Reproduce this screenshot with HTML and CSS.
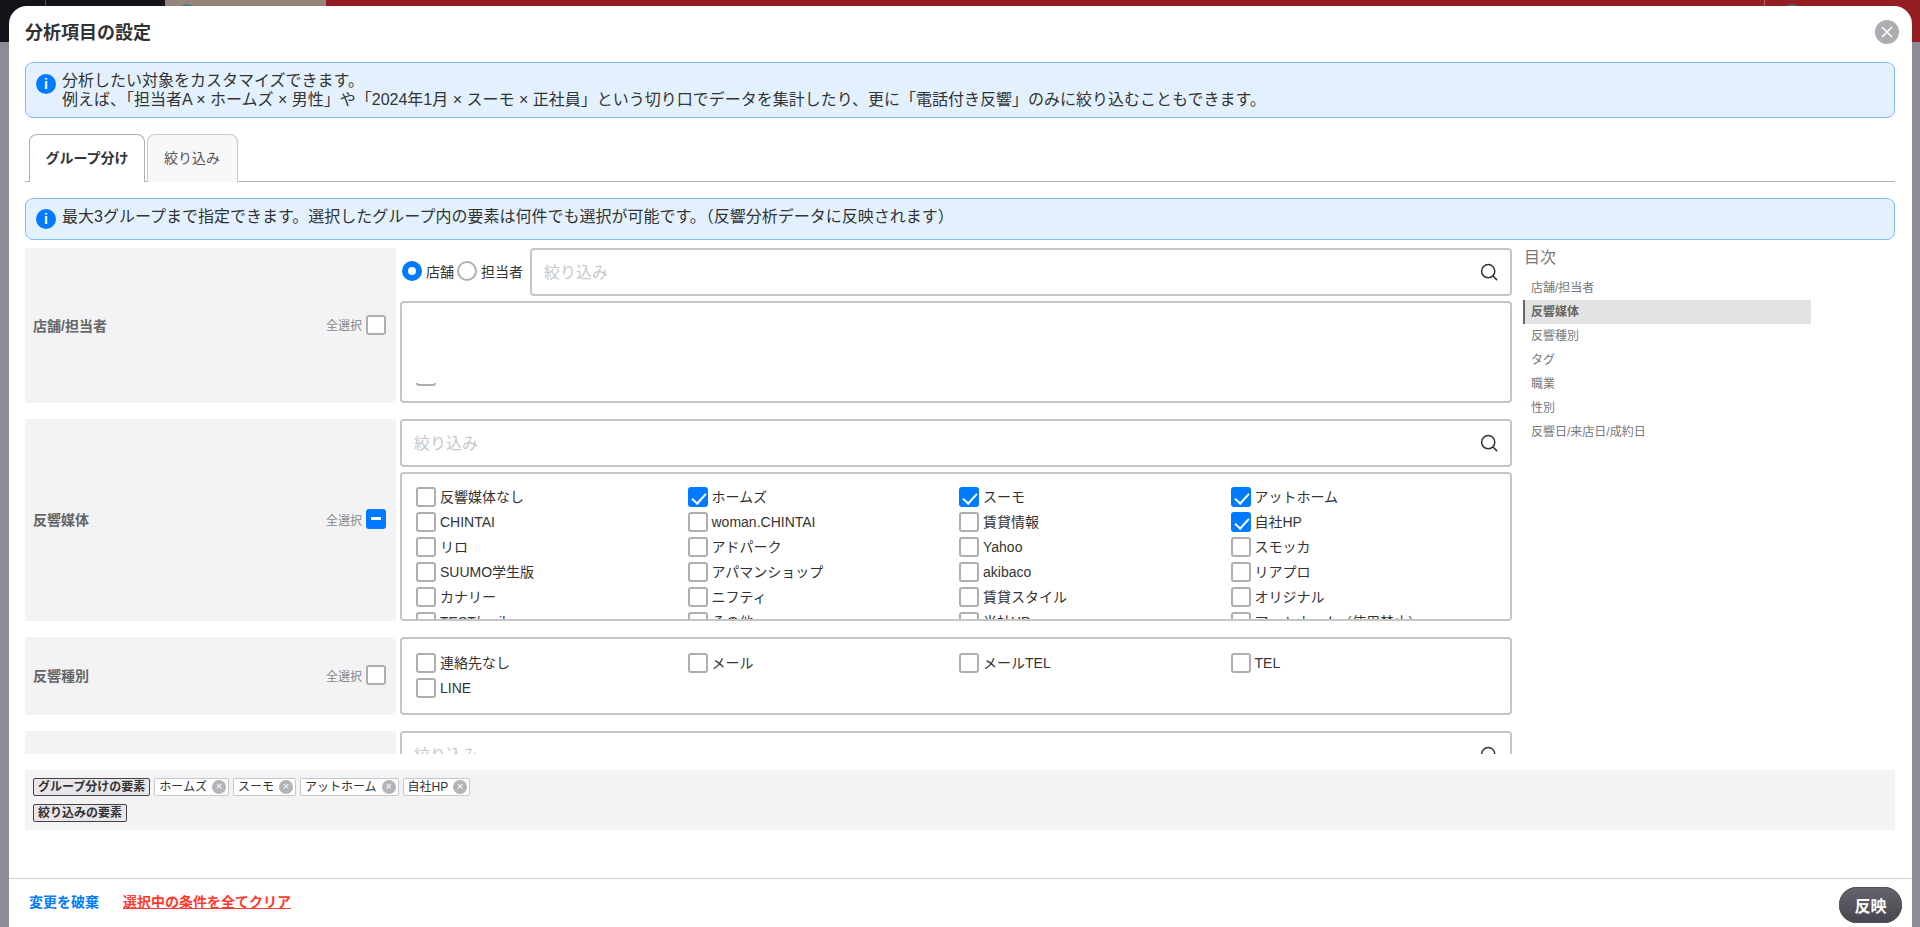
FILE: index.html
```html
<!DOCTYPE html>
<html lang="ja">
<head>
  <title>分析項目の設定</title>
  <meta charset="UTF-8">
  <link rel="stylesheet" href="styles.css">
</head>
<body>
  <!-- page behind the dialog, only the top edge shows -->
  <div class="backdrop">
    <div class="backdrop-bar">
      <div class="bar-dark"><span class="bar-line"></span></div>
      <div class="bar-photo"><span class="bar-dot"></span></div>
      <div class="bar-red"><span class="bar-line bar-line-right"></span><span class="bar-dot bar-dot-right"></span></div>
    </div>
  </div>

  <div class="modal">
    <div class="modal-head">
      <h1>分析項目の設定</h1>
      <button class="close-button" aria-label="閉じる">
        <svg width="12" height="12" viewBox="0 0 12 12"><path d="M1.5 1.5l9 9M10.5 1.5l-9 9" stroke="#fff" stroke-width="1.6" stroke-linecap="round" fill="none"/></svg>
      </button>
    </div>

    <div class="modal-body">
      <div class="info-box">
        <span class="info-icon">i</span>
        <p>分析したい対象をカスタマイズできます。<br>例えば、「担当者A × ホームズ × 男性」や「2024年1月 × スーモ × 正社員」という切り口でデータを集計したり、更に「電話付き反響」のみに絞り込むこともできます。</p>
      </div>

      <div class="tabs">
        <div class="tab tab-active">グループ分け</div>
        <div class="tab">絞り込み</div>
      </div>

      <div class="info-box info-box-single">
        <span class="info-icon">i</span>
        <p>最大3グループまで指定できます。選択したグループ内の要素は何件でも選択が可能です。（反響分析データに反映されます）</p>
      </div>

      <div class="scroll-area">
        <div class="sections">

          <div class="section section-staff">
            <div class="section-label">
              <span>店舗/担当者</span>
              <label class="select-all">全選択<span class="checkbox"></span></label>
            </div>
            <div class="section-fields">
              <div class="search-row">
                <label class="radio-item"><span class="radio radio-on"></span>店舗</label>
                <label class="radio-item"><span class="radio"></span>担当者</label>
                <div class="search-input search-input-grow">
                  <span class="placeholder">絞り込み</span>
                  <svg class="search-icon" width="18" height="18" viewBox="0 0 18 18"><circle cx="8.2" cy="8.2" r="6.6" fill="none" stroke="#333" stroke-width="1.5"/><path d="M13 13l3.6 3.6" stroke="#333" stroke-width="1.5" stroke-linecap="round"/></svg>
                </div>
              </div>
              <div class="list-box list-box-staff">
                <span class="checkbox-sliver"></span>
              </div>
            </div>
          </div>

          <div class="section section-media">
            <div class="section-label">
              <span>反響媒体</span>
              <label class="select-all">全選択<span class="checkbox checkbox-mixed"></span></label>
            </div>
            <div class="section-fields">
              <div class="search-input">
                <span class="placeholder">絞り込み</span>
                <svg class="search-icon" width="18" height="18" viewBox="0 0 18 18"><circle cx="8.2" cy="8.2" r="6.6" fill="none" stroke="#333" stroke-width="1.5"/><path d="M13 13l3.6 3.6" stroke="#333" stroke-width="1.5" stroke-linecap="round"/></svg>
              </div>
              <div class="list-box list-box-media">
                <div class="check-grid">
                  <label class="check-item"><span class="checkbox"></span>反響媒体なし</label>
                  <label class="check-item"><span class="checkbox checkbox-on"></span>ホームズ</label>
                  <label class="check-item"><span class="checkbox checkbox-on"></span>スーモ</label>
                  <label class="check-item"><span class="checkbox checkbox-on"></span>アットホーム</label>
                  <label class="check-item"><span class="checkbox"></span>CHINTAI</label>
                  <label class="check-item"><span class="checkbox"></span>woman.CHINTAI</label>
                  <label class="check-item"><span class="checkbox"></span>賃貸情報</label>
                  <label class="check-item"><span class="checkbox checkbox-on"></span>自社HP</label>
                  <label class="check-item"><span class="checkbox"></span>リロ</label>
                  <label class="check-item"><span class="checkbox"></span>アドパーク</label>
                  <label class="check-item"><span class="checkbox"></span>Yahoo</label>
                  <label class="check-item"><span class="checkbox"></span>スモッカ</label>
                  <label class="check-item"><span class="checkbox"></span>SUUMO学生版</label>
                  <label class="check-item"><span class="checkbox"></span>アパマンショップ</label>
                  <label class="check-item"><span class="checkbox"></span>akibaco</label>
                  <label class="check-item"><span class="checkbox"></span>リアプロ</label>
                  <label class="check-item"><span class="checkbox"></span>カナリー</label>
                  <label class="check-item"><span class="checkbox"></span>ニフティ</label>
                  <label class="check-item"><span class="checkbox"></span>賃貸スタイル</label>
                  <label class="check-item"><span class="checkbox"></span>オリジナル</label>
                  <label class="check-item"><span class="checkbox"></span>TEST/mail</label>
                  <label class="check-item"><span class="checkbox"></span>その他</label>
                  <label class="check-item"><span class="checkbox"></span>当社HP</label>
                  <label class="check-item"><span class="checkbox"></span>アットホーム（使用禁止）</label>
                </div>
              </div>
            </div>
          </div>

          <div class="section section-type">
            <div class="section-label">
              <span>反響種別</span>
              <label class="select-all">全選択<span class="checkbox"></span></label>
            </div>
            <div class="section-fields">
              <div class="list-box list-box-type">
                <div class="check-grid">
                  <label class="check-item"><span class="checkbox"></span>連絡先なし</label>
                  <label class="check-item"><span class="checkbox"></span>メール</label>
                  <label class="check-item"><span class="checkbox"></span>メールTEL</label>
                  <label class="check-item"><span class="checkbox"></span>TEL</label>
                  <label class="check-item"><span class="checkbox"></span>LINE</label>
                </div>
              </div>
            </div>
          </div>

          <div class="section">
            <div class="section-label"></div>
            <div class="section-fields">
              <div class="search-input">
                <span class="placeholder">絞り込み</span>
                <svg class="search-icon" width="18" height="18" viewBox="0 0 18 18"><circle cx="8.2" cy="8.2" r="6.6" fill="none" stroke="#333" stroke-width="1.5"/><path d="M13 13l3.6 3.6" stroke="#333" stroke-width="1.5" stroke-linecap="round"/></svg>
              </div>
            </div>
          </div>

        </div>

        <div class="toc">
          <div class="toc-title">目次</div>
          <div class="toc-item">店舗/担当者</div>
          <div class="toc-item toc-item-active">反響媒体</div>
          <div class="toc-item">反響種別</div>
          <div class="toc-item">タグ</div>
          <div class="toc-item">職業</div>
          <div class="toc-item">性別</div>
          <div class="toc-item">反響日/来店日/成約日</div>
        </div>
      </div>

      <div class="tag-bar">
        <div class="tag-row">
          <span class="tag-heading">グループ分けの要素</span>
          <span class="tag">ホームズ<span class="tag-remove">×</span></span>
          <span class="tag">スーモ<span class="tag-remove">×</span></span>
          <span class="tag">アットホーム<span class="tag-remove">×</span></span>
          <span class="tag">自社HP<span class="tag-remove">×</span></span>
        </div>
        <div class="tag-row">
          <span class="tag-heading">絞り込みの要素</span>
        </div>
      </div>
    </div>

    <div class="modal-foot">
      <a class="link-discard">変更を破棄</a>
      <a class="link-clear">選択中の条件を全てクリア</a>
      <button class="apply-button">反映</button>
    </div>
  </div>
</body>
</html>
```

FILE: styles.css
```css
* {
  box-sizing: border-box;
}
html, body {
  margin: 0;
  height: 100%;
  overflow: hidden;
}
body {
  font-family: "Liberation Sans", "Noto Sans CJK JP", sans-serif;
  font-size: 14px;
  color: #333;
  background-color: #8e8c92;
}

/* page behind the dialog */
.backdrop-bar {
  display: flex;
  height: 42px;
}
.bar-dark {
  width: 165px;
  background-color: #15131a;
  position: relative;
}
.bar-photo {
  width: 161px;
  background-color: #96857b;
  position: relative;
}
.bar-red {
  flex: 1;
  background-color: #951d24;
  position: relative;
}
.bar-line {
  position: absolute;
  left: 45px;
  top: 0;
  width: 1px;
  height: 6px;
  background-color: #55535a;
}
.bar-line-right {
  left: 1438px;
  background-color: #b06066;
}
.bar-dot {
  position: absolute;
  left: 12px;
  top: 4px;
  width: 20px;
  height: 20px;
  border-radius: 50%;
  background-color: #3f7f85;
}
.bar-dot-right {
  left: 1456px;
  background-color: #5c5a66;
}

/* dialog */
.modal {
  position: absolute;
  left: 9px;
  top: 6px;
  width: 1903px;
  height: 921px;
  background-color: #fff;
  border-radius: 18px 18px 0 0;
  display: flex;
  flex-direction: column;
}
.modal-head {
  height: 56px;
  padding: 15px 13px 0 16px;
  display: flex;
  justify-content: space-between;
  align-items: flex-start;
}
h1 {
  margin: 0;
  font-size: 18px;
  line-height: 24px;
  font-weight: 700;
}
.close-button {
  width: 24px;
  height: 24px;
  margin-top: -1px;
  padding: 0;
  border: none;
  border-radius: 50%;
  background-color: #aeaeb2;
  display: flex;
  align-items: center;
  justify-content: center;
}
.modal-body {
  flex: 1;
  padding: 0 17px 0 16px;
}

/* info boxes */
.info-box {
  display: flex;
  gap: 6px;
  height: 56px;
  padding: 8px 10px 7px;
  font-size: 16px;
  background-color: #e3f1fe;
  border: 1px solid #7fbdfa;
  border-radius: 8px;
}
.info-box p {
  margin: 0;
  line-height: 19px;
}
.info-box-single {
  height: 42px;
  margin-top: 16px;
  padding-top: 9px;
}
.info-box-single p {
  line-height: 20px;
  margin-top: -1px;
}
.info-icon {
  flex: none;
  width: 20px;
  height: 20px;
  margin-top: 3px;
  border-radius: 50%;
  background-color: #007aff;
  color: #fff;
  font-size: 14px;
  font-weight: 700;
  line-height: 20px;
  text-align: center;
}
.info-box-single .info-icon {
  margin-top: 1px;
}

/* tabs */
.tabs {
  display: flex;
  gap: 2px;
  height: 48px;
  margin-top: 16px;
  padding-left: 4px;
  border-bottom: 1px solid #b0b0b0;
}
.tab {
  height: 48px;
  padding: 0 17px 0 16px;
  font-size: 14px;
  line-height: 46px;
  color: #555;
  background-color: #f8f8fa;
  border: 1px solid #c8c8c8;
  border-bottom: none;
  border-radius: 8px 8px 0 0;
}
.tab-active {
  width: 116px;
  padding: 0;
  text-align: center;
  color: #333;
  font-weight: 700;
  background-color: #fff;
  border-color: #b0b0b0;
  position: relative;
  z-index: 1;
}

/* scrolling part of the form */
.scroll-area {
  display: flex;
  gap: 11px;
  height: 506px;
  margin-top: 8px;
  overflow: hidden;
}
.sections {
  width: 1487px;
  flex: none;
}
.section {
  display: flex;
  gap: 4px;
  margin-bottom: 16px;
}
.section-label {
  flex: none;
  width: 371px;
  padding: 0 10px 2px 8px;
  display: flex;
  align-items: center;
  justify-content: space-between;
  font-weight: 700;
  font-size: 14px;
  color: #666;
  background-color: #f3f3f5;
}
.select-all {
  display: flex;
  align-items: center;
  gap: 4px;
  font-size: 12px;
  font-weight: 400;
  color: #888;
}
.section-fields {
  flex: 1;
  min-width: 0;
  display: flex;
  flex-direction: column;
  gap: 5px;
}
.search-row {
  display: flex;
  align-items: center;
}
.radio-item {
  display: flex;
  align-items: center;
  gap: 4px;
  margin: 0 1px 2px 2px;
}
.radio {
  width: 20px;
  height: 20px;
  border: 2px solid #b0b0b0;
  border-radius: 50%;
  background-color: #fff;
}
.radio-on {
  border: 6px solid #007aff;
}
.search-input {
  height: 48px;
  padding: 0 12px;
  display: flex;
  align-items: center;
  justify-content: space-between;
  border: 2px solid #c6c6c8;
  border-radius: 4px;
  background-color: #fff;
}
.search-input-grow {
  flex: 1;
  margin-left: 6px;
}
.placeholder {
  font-size: 16px;
  padding-bottom: 3px;
  color: #c8c8cc;
}
.list-box {
  border: 2px solid #c6c6c8;
  border-radius: 4px;
  padding: 13px 14px;
  background-color: #fff;
  overflow: hidden;
}
.list-box-staff {
  height: 102px;
  padding-top: 80px;
}
.list-box-media {
  height: 149px;
  padding-bottom: 0;
}
.list-box-type {
  height: 78px;
  padding-top: 14px;
}
.check-grid {
  display: grid;
  grid-template-columns: repeat(4, 271.5px);
  grid-auto-rows: 25px;
}
.check-item {
  display: flex;
  align-items: flex-start;
  gap: 4px;
  line-height: 20px;
  white-space: nowrap;
}
.checkbox {
  flex: none;
  display: inline-block;
  width: 20px;
  height: 20px;
  border: 2px solid #aeaeb2;
  border-radius: 3px;
  background-color: #fff;
  position: relative;
}
.checkbox-on, .checkbox-mixed {
  background-color: #007aff;
  border-color: #007aff;
}
.checkbox-on::after {
  content: "";
  position: absolute;
  left: 5px;
  top: 1px;
  width: 6px;
  height: 12px;
  border-right: 2px solid #fff;
  border-bottom: 2px solid #fff;
  transform: rotate(42deg);
}
.checkbox-mixed::after {
  content: "";
  position: absolute;
  left: 3px;
  top: 6px;
  width: 10px;
  height: 3px;
  background-color: #fff;
}
.checkbox-sliver {
  display: block;
  width: 20px;
  height: 3px;
  border: 2px solid #aeaeb2;
  border-top: none;
  border-radius: 0 0 3px 3px;
}

/* table of contents */
.toc {
  width: 288px;
  flex: none;
  font-size: 12px;
  color: #777;
}
.toc-title {
  font-size: 16px;
  line-height: 20px;
  padding: 0 1px;
  margin-bottom: 8px;
}
.toc-item {
  height: 24px;
  line-height: 24px;
  padding-left: 8px;
}
.toc-item-active {
  padding-left: 6px;
  font-weight: 700;
  color: #666;
  background-color: #e3e3e3;
  border-left: 2px solid #666;
}

/* selected tags */
.tag-bar {
  margin-top: 16px;
  height: 60px;
  padding: 8px;
  display: flex;
  flex-direction: column;
  gap: 8px;
  background-color: #f3f3f5;
}
.tag-row {
  display: flex;
  gap: 4px;
}
.tag-heading {
  height: 18px;
  padding: 0 4px;
  font-size: 12px;
  font-weight: 700;
  line-height: 16px;
  background-color: #e8e6ea;
  border: 1px solid #444;
  border-radius: 2px;
}
.tag {
  height: 18px;
  padding: 0 2px 0 4px;
  display: flex;
  align-items: center;
  gap: 5px;
  font-size: 12px;
  line-height: 16px;
  background-color: #fff;
  border: 1px solid #c8c8cc;
  border-radius: 2px;
}
.tag-remove {
  width: 14px;
  height: 14px;
  border-radius: 50%;
  background-color: #b4b4b8;
  color: #fff;
  font-size: 11px;
  line-height: 13px;
  text-align: center;
}

/* footer */
.modal-foot {
  height: 49px;
  padding: 0 10px 0 20px;
  display: flex;
  align-items: center;
  gap: 24px;
  border-top: 1px solid #d0d0d0;
  font-weight: 700;
  font-size: 14px;
}
.link-discard {
  color: #007aff;
  margin-bottom: 4px;
}
.link-clear {
  color: #ff3b30;
  text-decoration: underline;
  margin-bottom: 4px;
}
.apply-button {
  margin-left: auto;
  margin-top: 4px;
  width: 63px;
  height: 36px;
  border: none;
  border-radius: 18px;
  background: linear-gradient(#66646c, #46444c);
  box-shadow: 0 0 0 1px #55535a inset;
  color: #fff;
  font-family: inherit;
  font-size: 16px;
  font-weight: 700;
}
```
